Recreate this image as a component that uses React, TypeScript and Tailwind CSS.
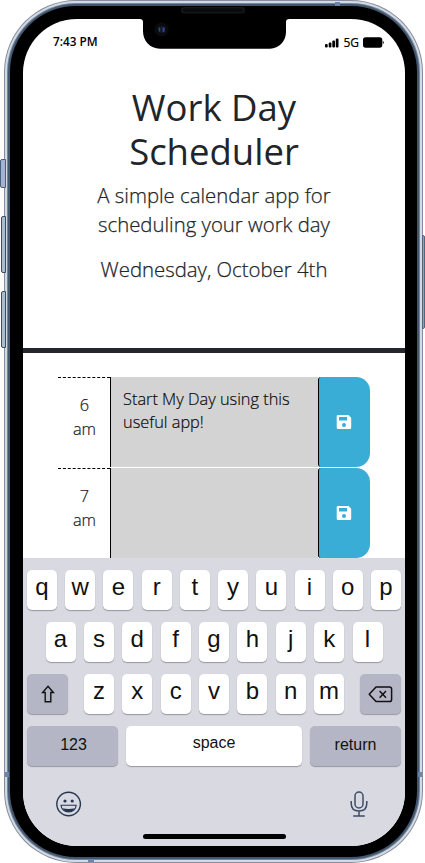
import React from "react";

const SANS = "font-['Open_Sans',sans-serif]";

function Key({ label, className = "" }: { label: React.ReactNode; className?: string }) {
  return (
    <div
      className={`flex h-10 items-center justify-center rounded-[5px] shadow-[0_1px_1px_#96979e] ${className}`}
    >
      {label}
    </div>
  );
}

function Letters({ letters }: { letters: string }) {
  return (
    <>
      {letters.split("").map((c) => (
        <Key
          key={c}
          className="w-[30px] bg-white text-[24px] leading-none text-[#111]"
          label={<span className="pb-[6px]">{c}</span>}
        />
      ))}
    </>
  );
}

function SaveIcon() {
  return (
    <svg className="mr-[2px]" width="16" height="16" viewBox="0 0 16 16">
      <path
        fill="#fff"
        fillRule="evenodd"
        d="M2 1H12.500L15.200 3.700V13.700A1.300 1.300 0 0 1 13.900 15H2A1.300 1.300 0 0 1 .7 13.700V2.300A1.300 1.300 0 0 1 2 1ZM3 3V6.500H11V3H3ZM8 9A2 2 0 1 0 8 13A2 2 0 0 0 8 9Z"
      />
    </svg>
  );
}

function TimeBlock({ hour, text, className = "" }: { hour: string; text: string; className?: string }) {
  return (
    <div className={`flex h-[90px] w-[312px] text-[16.350px] font-light [-webkit-text-stroke:0.2px_#222] ${className}`}>
      <div className="w-[52px] border-t border-dashed border-black pl-[1px] pt-[15px] text-center leading-[24px] text-[#111]">
        {hour}
        <br />
        am
      </div>
      <div className="w-[208px] whitespace-pre border-l border-black bg-[#d3d3d3] px-3 pt-[11px] leading-[23px] text-black">
        {text}
      </div>
      <div className="flex w-[52px] items-center justify-center rounded-l-[3px] rounded-r-[14px] border-l border-black bg-[#39add6]">
        <SaveIcon />
      </div>
    </div>
  );
}

function StatusBar() {
  return (
    <div className="flex h-[45px] shrink-0 items-center justify-between pl-[30px] pr-[21px] text-black">
      <span className="text-[11.800px] font-semibold leading-none">7:43 PM</span>
      <div className="flex items-center gap-[4px] pt-[2px]">
        <svg width="14" height="10" viewBox="0 0 14 10">
          <rect x="0" y="6" width="2.700" height="3.500" rx="1" />
          <rect x="3.700" y="4.500" width="2.700" height="5" rx="1" />
          <rect x="7.300" y="2.500" width="2.700" height="7" rx="1" />
          <rect x="10.800" y=".5" width="2.700" height="9" rx="1" />
        </svg>
        <span className="text-[12px] leading-none [-webkit-text-stroke:0.2px_#000]">5G</span>
        <svg width="21" height="11" viewBox="0 0 21 11">
          <rect x="0" y=".3" width="19.300" height="10.400" rx="2.600" />
          <path d="M19.800 3.800a2 2 0 0 1 0 3.400Z" />
        </svg>
      </div>
    </div>
  );
}

function Notch() {
  return (
    <svg className="absolute left-[136px] top-[4px]" width="156" height="46" viewBox="136 4 156 46">
      <path d="M136 19H139.500C142 19 143 20 143 22V31C143 41 150 48.700 160 48.700H270C279 48.700 286 41 286 32V22C286 20 287 19 289.500 19H292V12H136Z" />
      <rect x="181" y="7" width="64" height="6.500" rx="3" fill="#151617" />
      <rect x="183" y="8.500" width="60" height="3.200" rx="1.600" fill="#0a0a0a" />
      <circle cx="161.500" cy="29.500" r="7" fill="#0a0b0d" />
      <circle cx="161.500" cy="29.500" r="3.700" fill="#101522" />
      <ellipse cx="159.400" cy="29.500" rx="1" ry="2.400" fill="#1d4a61" />
      <ellipse cx="163.600" cy="29.500" rx="1.300" ry="2.700" fill="#323d86" />
    </svg>
  );
}

function Keyboard() {
  return (
    <div className="flex h-[288px] shrink-0 flex-col gap-3 bg-[#d8d9e1] px-1 pt-3 font-['Liberation_Sans',sans-serif] text-[#111]">
      <div className="flex justify-between">
        <Letters letters="qwertyuiop" />
      </div>
      <div className="flex justify-between px-[18.500px]">
        <Letters letters="asdfghjkl" />
      </div>
      <div className="flex justify-between">
        <Key
          className="w-[41px] bg-[#b4b6c5]"
          label={
            <svg width="14" height="18" viewBox="0 0 14 18" fill="none" stroke="#111" strokeWidth="1.400">
              <path d="M7 1.300 12.400 7.500H9.800V16.800H4.200V7.500H1.600Z" />
            </svg>
          }
        />
        <div className="flex w-[260px] justify-between">
          <Letters letters="zxcvbnm" />
        </div>
        <Key
          className="w-[41px] bg-[#b4b6c5]"
          label={
            <svg width="25" height="17" viewBox="0 0 25 17" fill="none" stroke="#111" strokeWidth="1.500" strokeLinejoin="round">
              <path d="M8 1H21.500Q23.600 1 23.600 3V13.500Q23.600 15.600 21.500 15.600H8L1.200 8.300Z" />
              <path d="m11.600 5 6.400 6.700m0-6.700-6.400 6.700" />
            </svg>
          }
        />
      </div>
      <div className="flex justify-between text-[16px] leading-none">
        <Key className="w-[91px] bg-[#b4b6c5]" label={<span className="pb-[2px] pl-[2px]">123</span>} />
        <Key className="w-[176px] bg-white" label={<span className="pb-[6px]">space</span>} />
        <Key className="w-[91px] bg-[#b4b6c5]" label={<span className="pb-[2px]">return</span>} />
      </div>
      <div className="flex justify-between pl-[28px] pr-[33px] pt-[12.500px]">
        <svg width="27" height="27" viewBox="0 0 27 27" fill="none" stroke="#263650" strokeWidth="1.400">
          <circle cx="13.600" cy="13" r="11.800" />
          <circle cx="10" cy="10" r="1.600" fill="#263650" stroke="none" />
          <circle cx="17.200" cy="10" r="1.600" fill="#263650" stroke="none" />
          <path strokeWidth="1.100" d="M6 14.300H21.200C21 18.200 17.800 20.900 13.600 20.900S6.200 18.200 6 14.300Z" />
          <path d="M7.200 17.200Q13.600 18.800 20 17.200Q17.800 20.900 13.600 20.900T7.200 17.200Z" fill="#263650" stroke="none" />
        </svg>
        <svg width="18" height="27" viewBox="0 0 18 27" fill="none" stroke="#3c4c66" strokeWidth="1.500">
          <rect x="5" y="1" width="8" height="16" rx="4" />
          <path d="M1.200 10V12.500Q1.200 20 9 20T16.800 12.500V10M9 20V25M3.200 25H14.800" />
        </svg>
      </div>
      <div className="mx-auto mt-[4px] h-[5px] w-[143px] rounded-full bg-black" />
    </div>
  );
}

export default function App() {
  return (
    <div className="relative h-[863px] w-[425px] overflow-hidden bg-white">
      <div className="absolute left-0 top-[159px] h-[29px] w-[6px] rounded-l-[2px] border border-[#4b607d] bg-[#a7b2ce]" />
      <div className="absolute left-[1px] top-[216px] h-[57px] w-[5px] rounded-l-[2px] border border-[#3d4d60] bg-[#a9bdcd]" />
      <div className="absolute left-[1px] top-[291px] h-[57px] w-[5px] rounded-l-[2px] border border-[#3d4d60] bg-[#a9bdcd]" />
      <div className="absolute left-[422px] top-[235px] h-[94px] w-[3px] rounded-r-[2px] border border-[#53647c] bg-[#8ba2bf]" />

      <div className="ml-1 h-[863px] w-[419px] rounded-[72px] bg-[#858e9e] p-px">
        <div className="h-full rounded-[71px] bg-[#d5d9e2] p-[2px]">
          <div className="h-full rounded-[69px] bg-[#7187a0] p-px">
            <div className="h-full rounded-[68px] bg-[#44566c] p-[2px]">
              <div className="h-full rounded-[66px] bg-black pb-[11px] pl-[13px] pr-[12px] pt-[13px]">
                <div className={`flex h-[827px] w-[382px] flex-col overflow-hidden rounded-[54px] bg-white ${SANS}`}>
                  <StatusBar />
                  <header className="flex h-[289px] shrink-0 flex-col items-center border-b-[5px] border-[#24272c] pt-[21px] text-center text-[#212529]">
                    <h1 className="text-[36.500px] font-normal leading-[44px]">
                      Work Day
                      <br />
                      Scheduler
                    </h1>
                    <p className="mt-[8px] text-[20.350px] font-light leading-[29px] [-webkit-text-stroke:0.25px_#212529]">
                      A simple calendar app for
                      <br />
                      scheduling your work day
                    </p>
                    <p className="mt-[16px] text-[20.350px] font-light leading-[29px] [-webkit-text-stroke:0.25px_#212529]">
                      Wednesday, October 4th
                    </p>
                  </header>
                  <main className="h-[205px] shrink-0 overflow-hidden pl-[35px] pt-[24px]">
                    <TimeBlock hour="6" text={"Start My Day using this\nuseful app!"} />
                    <TimeBlock hour="7" text="" className="mt-px" />
                  </main>
                  <Keyboard />
                </div>
              </div>
            </div>
          </div>
        </div>
      </div>

      <Notch />
      <div className="absolute left-[335px] top-[2px] h-[4px] w-[5px] bg-[#6f84a9]" />
      <div className="absolute left-[5px] top-[772px] h-[5px] w-[4px] bg-[#6f84a9]" />
      <div className="absolute left-[418px] top-[772px] h-[5px] w-[4px] bg-[#6f84a9]" />
      <div className="absolute left-[88px] top-[859px] h-[3px] w-[6px] bg-[#6f84a9]" />
    </div>
  );
}
